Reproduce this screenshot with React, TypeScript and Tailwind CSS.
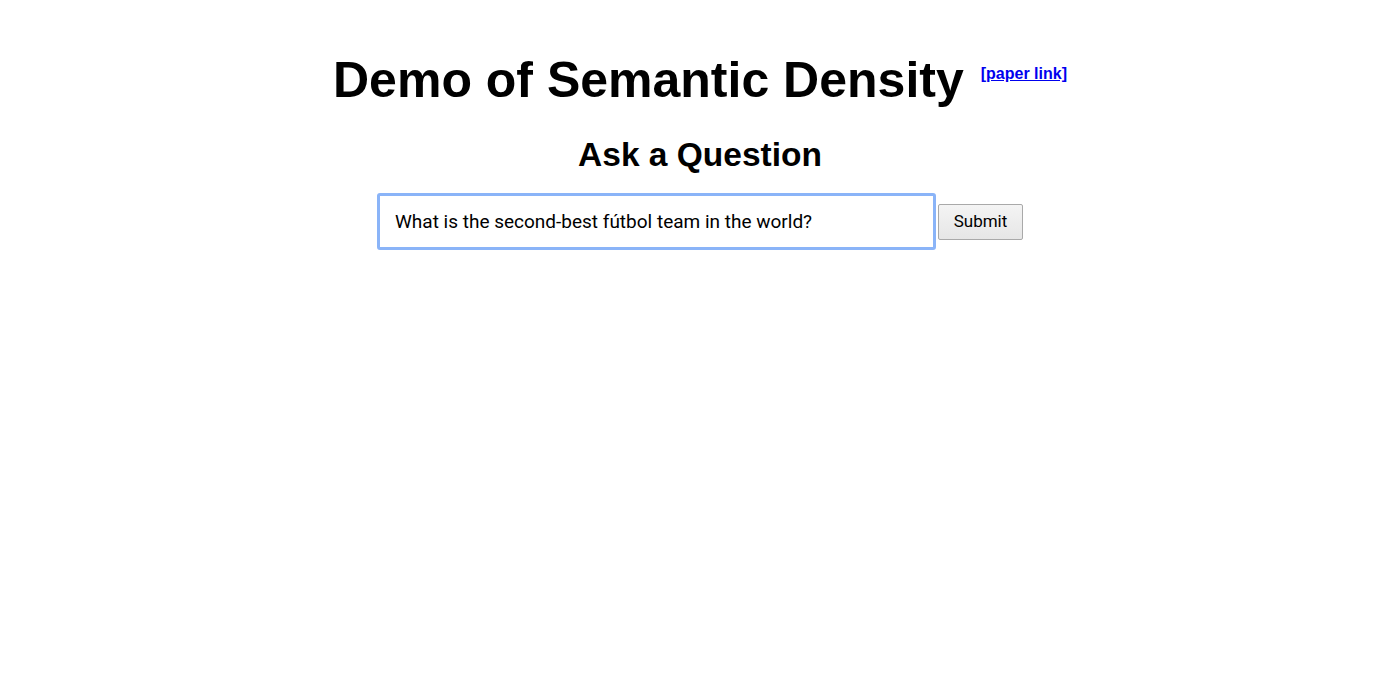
export default function App() {
  return (
    <div className="min-h-screen bg-white text-black" style={{ fontFamily: '"Liberation Sans", Arial, sans-serif' }}>
      <div className="flex flex-col items-center pt-[50px]">
        <h1 className="flex items-start gap-[17px]">
          <span className="text-[50px] font-bold leading-[60px]">Demo of Semantic Density</span>
          <a href="#" className="mt-[12px] text-[16px] font-bold text-[#0000ee] underline">[paper link]</a>
        </h1>
        <h2 className="mt-[25px] text-[33.5px] font-bold leading-[40px]">Ask a Question</h2>
        <div className="mt-[18px] flex items-center gap-[2px]">
          <input
            type="text"
            defaultValue="What is the second-best fútbol team in the world?"
            className="h-[57px] w-[559px] rounded-[3px] border-[3px] border-[#8ab4f8] bg-white px-[15px] text-[19px] text-black outline-none"
            style={{ fontFamily: 'Roboto, "Liberation Sans", sans-serif' }}
          />
          <button
            className="h-[36px] w-[85px] rounded-[2px] border border-[#a9a9a9] bg-gradient-to-b from-[#f4f4f4] to-[#e6e6e6] text-[17px] text-black"
            style={{ fontFamily: 'Roboto, "Liberation Sans", sans-serif' }}
          >
            Submit
          </button>
        </div>
      </div>
    </div>
  );
}
